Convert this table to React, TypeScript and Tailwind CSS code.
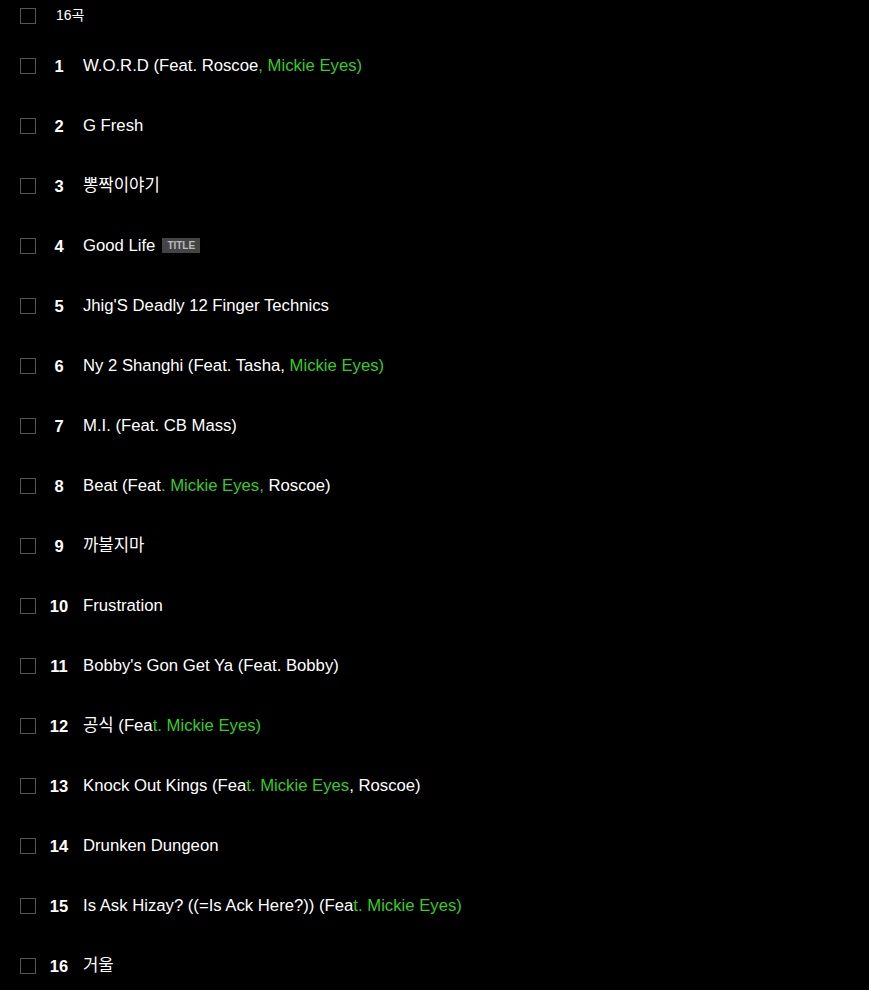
type Part = { t: string; hl?: boolean };

interface Track {
  no: number;
  parts: Part[];
  title?: boolean;
}

const tracks: Track[] = [
  { no: 1, parts: [{ t: "W.O.R.D (Feat. Roscoe" }, { t: ", Mickie Eyes)", hl: true }] },
  { no: 2, parts: [{ t: "G Fresh" }] },
  { no: 3, parts: [{ t: "뽕짝이야기" }] },
  { no: 4, parts: [{ t: "Good Life" }], title: true },
  { no: 5, parts: [{ t: "Jhig'S Deadly 12 Finger Technics" }] },
  { no: 6, parts: [{ t: "Ny 2 Shanghi (Feat. Tasha, " }, { t: "Mickie Eyes)", hl: true }] },
  { no: 7, parts: [{ t: "M.I. (Feat. CB Mass)" }] },
  { no: 8, parts: [{ t: "Beat (Feat" }, { t: ". Mickie Eyes, ", hl: true }, { t: "Roscoe)" }] },
  { no: 9, parts: [{ t: "까불지마" }] },
  { no: 10, parts: [{ t: "Frustration" }] },
  { no: 11, parts: [{ t: "Bobby's Gon Get Ya (Feat. Bobby)" }] },
  { no: 12, parts: [{ t: "공식 (Fea" }, { t: "t. Mickie Eyes)", hl: true }] },
  { no: 13, parts: [{ t: "Knock Out Kings (Fea" }, { t: "t. Mickie Eyes", hl: true }, { t: ", Roscoe)" }] },
  { no: 14, parts: [{ t: "Drunken Dungeon" }] },
  { no: 15, parts: [{ t: "Is Ask Hizay? ((=Is Ack Here?)) (Fea" }, { t: "t. Mickie Eyes)", hl: true }] },
  { no: 16, parts: [{ t: "거울" }] },
];

function Checkbox() {
  return <span className="block w-[16px] h-[16px] border border-[#555] shrink-0" />;
}

export default function App() {
  return (
    <div
      className="min-h-screen bg-black text-white"
      style={{ fontFamily: '"Liberation Sans", Arial, "Noto Sans CJK KR", sans-serif' }}
    >
      {/* header row */}
      <div className="flex items-center h-[31px] pl-[20px]">
        <Checkbox />
        <span className="ml-[20px] text-[14px]">16곡</span>
      </div>

      <ul className="pt-[5px]">
        {tracks.map((tr) => (
          <li key={tr.no} className="flex items-center h-[60px] pl-[20px]">
            <Checkbox />
            <span className="w-[46px] text-center text-[16.5px] font-bold">{tr.no}</span>
            <span className="ml-[1px] text-[16.7px] flex items-center">
              {tr.parts.map((p, i) => (
                <span key={i} className={p.hl ? "text-[#36cc24] whitespace-pre" : "whitespace-pre"}>
                  {p.t}
                </span>
              ))}
              {tr.title && (
                <span className="ml-[7px] bg-[#444] text-[#bbb] text-[10px] font-bold px-[5px] leading-[15px]">
                  TITLE
                </span>
              )}
            </span>
          </li>
        ))}
      </ul>
    </div>
  );
}
